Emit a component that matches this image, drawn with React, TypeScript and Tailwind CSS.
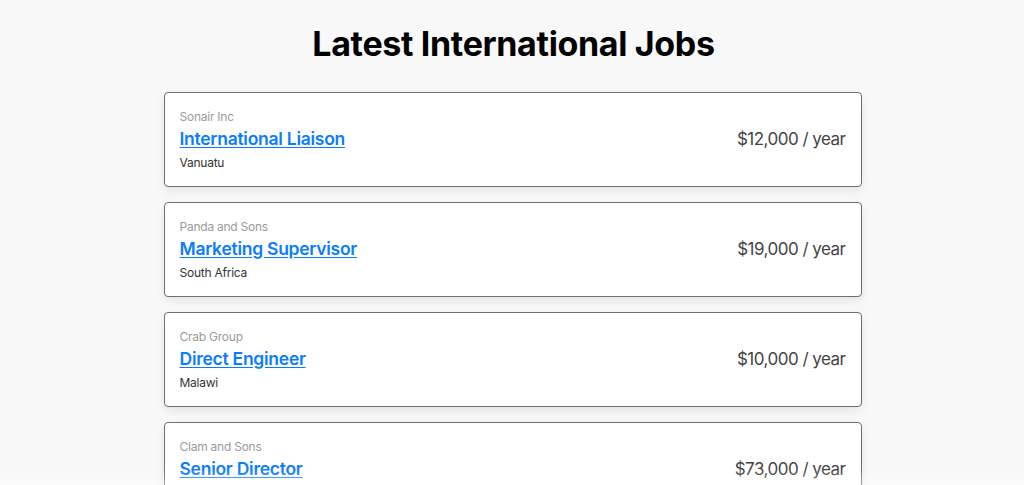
import React from "react";

type Job = {
  company: string;
  title: string;
  location: string;
  salary: string;
};

const jobs: Job[] = [
  { company: "Sonair Inc", title: "International Liaison", location: "Vanuatu", salary: "$12,000 / year" },
  { company: "Panda and Sons", title: "Marketing Supervisor", location: "South Africa", salary: "$19,000 / year" },
  { company: "Crab Group", title: "Direct Engineer", location: "Malawi", salary: "$10,000 / year" },
  { company: "Clam and Sons", title: "Senior Director", location: "Botswana", salary: "$73,000 / year" },
  { company: "Otter Ltd", title: "Regional Officer", location: "Peru", salary: "$41,000 / year" },
];

const JobCard: React.FC<{ job: Job }> = ({ job }) => {
  return (
    <div className="flex items-center justify-between bg-white border border-[#6f6f6f] rounded-[4px] shadow-[0_4px_10px_rgba(0,0,0,0.08)] px-[15px] pt-4 pb-[15px]">
      <div className="flex flex-col">
        {/* Company */}
        <span className="text-[12px] leading-4 text-[#9a9a9a] tracking-[-0.02em]">{job.company}</span>
        {/* Title */}
        <a
          href="#"
          className="text-[17.5px] leading-7 font-semibold text-[#0a7cff] underline underline-offset-2 tracking-[-0.015em]"
        >
          {job.title}
        </a>
        {/* Location */}
        <span className="mt-[2px] text-[12px] leading-4 text-[#333] tracking-[-0.02em]">{job.location}</span>
      </div>
      <span className="text-[17px] text-[#444] tracking-[-0.03em]">{job.salary}</span>
    </div>
  );
};

const App: React.FC = () => {
  return (
    <div className="min-h-screen bg-[#f8f8f8] font-['Inter','Liberation_Sans',sans-serif] overflow-hidden h-[485px] relative">
      <h1 className="pt-5 pl-[3px] text-center text-[34px] leading-[48px] font-bold text-black tracking-[-0.01em]">
        Latest International Jobs
      </h1>

      <div className="mt-6 flex justify-center pl-[1px]">
        <div className="w-[698px] flex flex-col gap-[15px]">
          {jobs.map((job) => (
            <JobCard key={job.title} job={job} />
          ))}
        </div>
      </div>

      {/* Bottom fade */}
      <div className="pointer-events-none absolute bottom-0 left-0 right-0 h-4 bg-gradient-to-t from-white/40 to-transparent" />
    </div>
  );
};

export default App;
